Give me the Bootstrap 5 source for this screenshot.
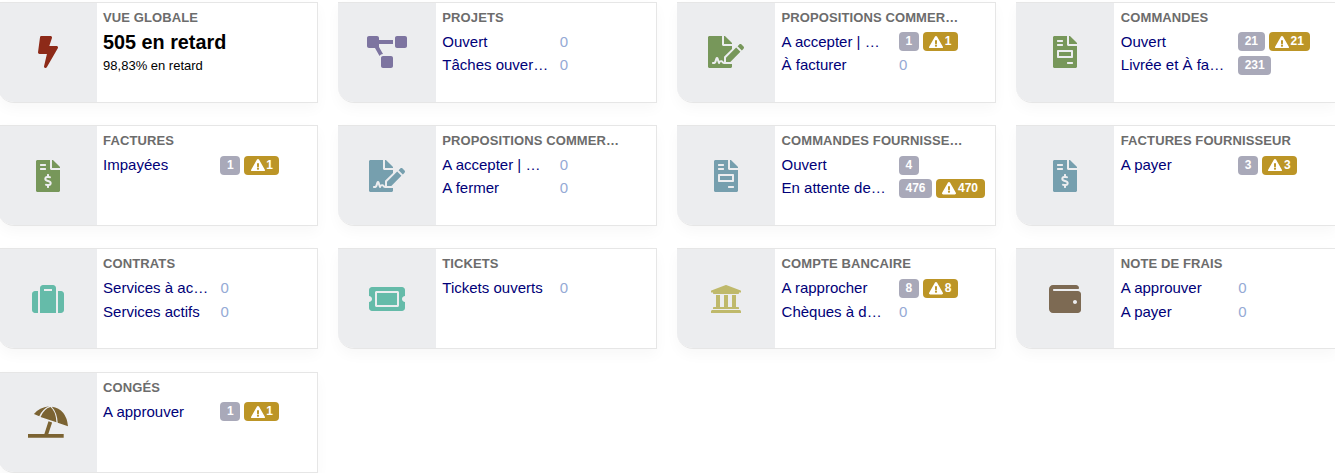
<!DOCTYPE html>
<html lang="fr">
  <head>
    <meta charset="UTF-8" />
    <meta name="viewport" content="width=device-width, initial-scale=1.0" />
    <title>Tableau de bord</title>
    <link
      href="https://cdn.jsdelivr.net/npm/bootstrap@5.3.0/dist/css/bootstrap.min.css"
      rel="stylesheet"
    />
    <script src="https://cdn.jsdelivr.net/npm/bootstrap@5.3.0/dist/js/bootstrap.bundle.min.js"></script>
    <style>
      html,
      body {
        overflow: hidden;
      }
      body {
        font-family: "Liberation Sans", Arial, sans-serif;
        font-size: 15px;
        background: #fff;
      }
      .board {
        margin-left: -1.7px;
        margin-right: -0.65px;
        padding-top: 1.7px;
      }
      .board > .row {
        --bs-gutter-x: 19.65px;
        --bs-gutter-y: 22.23px;
      }
      .tile {
        height: 101.1px;
        border: 1px solid #e6e6e6;
        border-left: 0;
        border-radius: 0 0 0 16px;
        box-shadow: 0 6px 14px rgba(0, 0, 0, 0.03);
        overflow: hidden;
      }
      .tile-side {
        width: 98.4px;
        margin: -1px 0;
        background: #ecedef;
      }
      .tile-body {
        padding: 6px 0 0 6.4px;
        min-width: 0;
      }
      .tile-title {
        font-size: 13px;
        font-weight: 700;
        line-height: 18px;
        letter-spacing: 0.1px;
        color: #6c6c6c;
        text-transform: uppercase;
        margin-bottom: 3.5px;
        white-space: nowrap;
      }
      .tile-line {
        height: 23.35px;
      }
      .tile-label {
        width: 117.4px;
        color: #000078;
        white-space: nowrap;
        flex-shrink: 0;
      }
      .tile-zero {
        color: #95aad5;
      }
      .tile-big {
        font-size: 19.8px;
        font-weight: 700;
        line-height: 24px;
        margin-top: 0.5px;
        color: #000;
      }
      .tile-sub {
        font-size: 13px;
        line-height: 24px;
        color: #000;
      }
      .tally {
        font-size: 12px;
        font-weight: 700;
        line-height: 19px;
        height: 19px;
        padding: 0 6.5px;
        border-radius: 4px;
        color: #fff;
      }
      .tally-grey {
        background: #a9a9b9;
      }
      .tally-late {
        background: #bc9526;
        display: inline-flex;
        align-items: center;
        gap: 1.5px;
      }
      .c-bolt { fill: #8d2a18; }
      .c-purple { fill: #7d74a0; }
      .c-green { fill: #77975a; }
      .c-blue { fill: #769fae; }
      .c-mint { fill: #65bba9; }
      .c-khaki { fill: #bfb96b; }
      .c-brown { fill: #7d6a53; }
      .c-sand { fill: #7b6332; }
    </style>
  </head>
  <body>
    <svg class="d-none" xmlns="http://www.w3.org/2000/svg">
      <defs>
        <path id="i-bolt" d="M296 160H180.6l42.6-129.8C227.2 15 215.7 0 200 0H56C44 0 33.8 8.9 32.2 20.8l-32 240C-1.7 275.2 9.5 288 24 288h118.7L96.6 482.5c-3.6 15.2 8 29.5 23.3 29.5 8.4 0 16.4-4.4 20.8-12l176-304c9.3-15.9-2.2-36-20.7-36z" />
        <path id="i-diagram" d="M384 320H256c-17.67 0-32 14.33-32 32v128c0 17.67 14.33 32 32 32h128c17.67 0 32-14.33 32-32V352c0-17.67-14.33-32-32-32zM192 32c0-17.67-14.33-32-32-32H32C14.33 0 0 14.33 0 32v128c0 17.67 14.33 32 32 32h95.72l73.16 128.04C211.98 300.98 232.4 288 256 288h.28L192 175.51V128h224V64H192V32zM608 0H480c-17.67 0-32 14.33-32 32v128c0 17.67 14.33 32 32 32h128c17.67 0 32-14.33 32-32V32c0-17.67-14.33-32-32-32z" />
        <path id="i-sign" d="M218.17 424.14c-2.95-5.92-8.09-6.52-10.17-6.52s-7.22.59-10.02 6.19l-7.67 15.34c-6.37 12.78-25.03 11.37-29.48-2.09L144 386.59l-10.61 31.88c-5.89 17.66-22.38 29.53-41 29.53H80c-8.84 0-16-7.16-16-16s7.16-16 16-16h12.39c4.83 0 9.11-3.08 10.64-7.66l18.19-54.64c3.3-9.81 12.44-16.41 22.78-16.41s19.48 6.59 22.77 16.41l13.88 41.64c19.75-16.19 54.06-9.7 66 14.16 1.89 3.78 5.49 5.95 9.36 6.26v-82.12l128-127.09V160H248c-13.2 0-24-10.8-24-24V0H24C10.7 0 0 10.7 0 24v464c0 13.3 10.7 24 24 24h336c13.3 0 24-10.7 24-24v-40l-128-.11c-16.12-.31-30.58-9.28-37.83-23.75zM384 121.9c0-6.3-2.5-12.4-7-16.9L279.1 7c-4.5-4.5-10.6-7-17-7H256v128h128v-6.1zm-96 225.06V416h68.99l161.68-162.78-67.88-67.88L288 346.96zm280.54-179.63l-31.87-31.87c-9.94-9.94-26.07-9.94-36.01 0l-27.25 27.25 67.88 67.88 27.25-27.25c9.95-9.94 9.95-26.07 0-36.01z" />
        <path id="i-invoice" d="M288 256H96v64h192v-64zm89-151L279.1 7c-4.5-4.5-10.6-7-17-7H256v128h128v-6.1c0-6.3-2.5-12.4-7-16.9zm-153 31V0H24C10.7 0 0 10.7 0 24v464c0 13.3 10.7 24 24 24h336c13.3 0 24-10.7 24-24V160H248c-13.2 0-24-10.8-24-24zM64 72c0-4.42 3.58-8 8-8h80c4.42 0 8 3.58 8 8v16c0 4.42-3.58 8-8 8H72c-4.42 0-8-3.58-8-8V72zm0 64c0-4.42 3.58-8 8-8h80c4.42 0 8 3.58 8 8v16c0 4.42-3.58 8-8 8H72c-4.42 0-8-3.58-8-8v-16zm256 304c0 4.42-3.58 8-8 8h-80c-4.42 0-8-3.58-8-8v-16c0-4.42 3.58-8 8-8h80c4.42 0 8 3.58 8 8v16zm0-200v96c0 8.84-7.16 16-16 16H80c-8.84 0-16-7.16-16-16v-96c0-8.84 7.16-16 16-16h224c8.84 0 16 7.16 16 16z" />
        <path id="i-dollar" d="M377 105L279.1 7c-4.5-4.5-10.6-7-17-7H256v128h128v-6.1c0-6.3-2.5-12.4-7-16.9zm-153 31V0H24C10.7 0 0 10.7 0 24v464c0 13.3 10.7 24 24 24h336c13.3 0 24-10.7 24-24V160H248c-13.2 0-24-10.8-24-24zM64 72c0-4.42 3.58-8 8-8h80c4.42 0 8 3.58 8 8v16c0 4.42-3.58 8-8 8H72c-4.42 0-8-3.58-8-8V72zm0 80v-16c0-4.42 3.58-8 8-8h80c4.42 0 8 3.58 8 8v16c0 4.42-3.58 8-8 8H72c-4.42 0-8-3.58-8-8zm144 263.88V440c0 4.42-3.58 8-8 8h-16c-4.42 0-8-3.58-8-8v-24.29c-11.29-.58-22.27-4.52-31.37-11.35-3.9-2.93-4.1-8.77-.57-12.14l11.75-11.21c2.77-2.64 6.89-2.76 10.13-.73 3.87 2.42 8.26 3.72 12.82 3.72h28.11c6.5 0 11.8-5.92 11.8-13.19 0-5.95-3.61-11.19-8.77-12.73l-45-13.5c-18.59-5.58-31.58-23.42-31.58-43.39 0-24.52 19.05-44.44 42.67-45.07V232c0-4.42 3.58-8 8-8h16c4.42 0 8 3.58 8 8v24.29c11.29.58 22.27 4.51 31.37 11.35 3.9 2.93 4.1 8.77.57 12.14l-11.75 11.21c-2.77 2.64-6.89 2.76-10.13.73-3.87-2.43-8.26-3.72-12.82-3.72h-28.11c-6.5 0-11.8 5.92-11.8 13.19 0 5.95 3.61 11.19 8.77 12.73l45 13.5c18.59 5.58 31.58 23.42 31.58 43.39 0 24.53-19.05 44.44-42.67 45.07z" />
        <path id="i-case" d="M128 480h256V80c0-26.5-21.5-48-48-48H176c-26.5 0-48 21.5-48 48v400zm64-384h128v32H192V96zm320 80v256c0 26.5-21.5 48-48 48h-48V128h48c26.5 0 48 21.5 48 48zM96 480H48c-26.5 0-48-21.5-48-48V176c0-26.5 21.5-48 48-48h48v352z" />
        <path id="i-ticket" d="M128 160h320v192H128V160zm400 96c0 26.51 21.49 48 48 48v96c0 26.51-21.49 48-48 48H48c-26.51 0-48-21.49-48-48v-96c26.51 0 48-21.49 48-48s-21.49-48-48-48v-96c0-26.51 21.49-48 48-48h480c26.51 0 48 21.49 48 48v96c-26.51 0-48 21.49-48 48zm-48-104c0-13.255-10.745-24-24-24H120c-13.255 0-24 10.745-24 24v208c0 13.255 10.745 24 24 24h336c13.255 0 24-10.745 24-24V152z" />
        <path id="i-bank" d="M496 128v16a8 8 0 0 1-8 8h-24v12c0 6.627-5.373 12-12 12H60c-6.627 0-12-5.373-12-12v-12H24a8 8 0 0 1-8-8v-16a8 8 0 0 1 4.941-7.392l232-88a7.996 7.996 0 0 1 6.118 0l232 88A8 8 0 0 1 496 128zm-24 304H40c-13.255 0-24 10.745-24 24v16a8 8 0 0 0 8 8h464a8 8 0 0 0 8-8v-16c0-13.255-10.745-24-24-24zM96 192v192H60c-6.627 0-12 5.373-12 12v20h416v-20c0-6.627-5.373-12-12-12h-36V192h-64v192h-64V192h-64v192h-64V192H96z" />
        <path id="i-wallet" d="M461.2 128H80c-8.84 0-16-7.16-16-16s7.16-16 16-16h384c8.84 0 16-7.16 16-16 0-26.51-21.49-48-48-48H64C28.65 32 0 60.65 0 96v320c0 35.35 28.65 64 64 64h397.2c28.02 0 50.8-21.53 50.8-48V176c0-26.47-22.78-48-50.8-48zM416 336c-17.67 0-32-14.33-32-32s14.33-32 32-32 32 14.33 32 32-14.33 32-32 32z" />
        <path id="i-beach" d="M18 23Q34 4 64 0Q44 8 34 30ZM38 32Q48 8 68 2Q84 14 86 48ZM72 1Q116 8 121 60L90 50Q88 18 72 1ZM62 45L73 49L61 85H49ZM0 84H108V95H0Z" />
        <path id="i-warn" d="M569.517 440.013C587.975 472.007 564.806 512 527.94 512H48.054c-36.937 0-59.999-40.055-41.577-71.987L246.423 24.028c18.467-32.009 64.72-31.951 83.154 0l239.94 416.085zM288 354c-25.405 0-46 20.595-46 46s20.595 46 46 46 46-20.595 46-46-20.595-46-46-46zm-43.673-165.346l7.418 136c.347 6.364 5.609 11.346 11.982 11.346h48.546c6.373 0 11.635-4.982 11.982-11.346l7.418-136c.375-6.874-5.098-12.654-11.982-12.654h-63.383c-6.884 0-12.356 5.78-11.981 12.654z" />
      </defs>
    </svg>

    <div class="board">
      <div class="row row-cols-4">
        <div class="col">
          <div class="tile d-flex bg-white">
            <div class="tile-side d-flex align-items-center justify-content-center flex-shrink-0">
              <svg class="c-bolt" width="20" height="32" viewBox="0 0 320 512"><use href="#i-bolt" /></svg>
            </div>
            <div class="tile-body flex-grow-1">
              <div class="tile-title">Vue globale</div>
              <div class="tile-big">505 en retard</div>
              <div class="tile-sub">98,83% en retard</div>
            </div>
          </div>
        </div>

        <div class="col">
          <div class="tile d-flex bg-white">
            <div class="tile-side d-flex align-items-center justify-content-center flex-shrink-0">
              <svg class="c-purple" width="40" height="32" viewBox="0 0 640 512"><use href="#i-diagram" /></svg>
            </div>
            <div class="tile-body flex-grow-1">
              <div class="tile-title">Projets</div>
              <div class="tile-line d-flex align-items-center">
                <span class="tile-label">Ouvert</span><span class="tile-zero">0</span>
              </div>
              <div class="tile-line d-flex align-items-center">
                <span class="tile-label">Tâches ouver…</span><span class="tile-zero">0</span>
              </div>
            </div>
          </div>
        </div>

        <div class="col">
          <div class="tile d-flex bg-white">
            <div class="tile-side d-flex align-items-center justify-content-center flex-shrink-0">
              <svg class="c-green" width="36" height="32" viewBox="0 0 576 512"><use href="#i-sign" /></svg>
            </div>
            <div class="tile-body flex-grow-1">
              <div class="tile-title">Propositions commer…</div>
              <div class="tile-line d-flex align-items-center">
                <span class="tile-label">A accepter | …</span>
                <div class="d-flex gap-1">
                  <span class="badge tally tally-grey">1</span>
                  <span class="badge tally tally-late"><svg width="14" height="12.5" viewBox="0 0 576 512" fill="#fff"><use href="#i-warn" /></svg>1</span>
                </div>
              </div>
              <div class="tile-line d-flex align-items-center">
                <span class="tile-label">À facturer</span><span class="tile-zero">0</span>
              </div>
            </div>
          </div>
        </div>

        <div class="col">
          <div class="tile d-flex bg-white">
            <div class="tile-side d-flex align-items-center justify-content-center flex-shrink-0">
              <svg class="c-green" width="24" height="32" viewBox="0 0 384 512"><use href="#i-invoice" /></svg>
            </div>
            <div class="tile-body flex-grow-1">
              <div class="tile-title">Commandes</div>
              <div class="tile-line d-flex align-items-center">
                <span class="tile-label">Ouvert</span>
                <div class="d-flex gap-1">
                  <span class="badge tally tally-grey">21</span>
                  <span class="badge tally tally-late"><svg width="14" height="12.5" viewBox="0 0 576 512" fill="#fff"><use href="#i-warn" /></svg>21</span>
                </div>
              </div>
              <div class="tile-line d-flex align-items-center">
                <span class="tile-label">Livrée et À fa…</span>
                <span class="badge tally tally-grey">231</span>
              </div>
            </div>
          </div>
        </div>

        <div class="col">
          <div class="tile d-flex bg-white">
            <div class="tile-side d-flex align-items-center justify-content-center flex-shrink-0">
              <svg class="c-green" width="24" height="32" viewBox="0 0 384 512"><use href="#i-dollar" /></svg>
            </div>
            <div class="tile-body flex-grow-1">
              <div class="tile-title">Factures</div>
              <div class="tile-line d-flex align-items-center">
                <span class="tile-label">Impayées</span>
                <div class="d-flex gap-1">
                  <span class="badge tally tally-grey">1</span>
                  <span class="badge tally tally-late"><svg width="14" height="12.5" viewBox="0 0 576 512" fill="#fff"><use href="#i-warn" /></svg>1</span>
                </div>
              </div>
            </div>
          </div>
        </div>

        <div class="col">
          <div class="tile d-flex bg-white">
            <div class="tile-side d-flex align-items-center justify-content-center flex-shrink-0">
              <svg class="c-blue" width="36" height="32" viewBox="0 0 576 512"><use href="#i-sign" /></svg>
            </div>
            <div class="tile-body flex-grow-1">
              <div class="tile-title">Propositions commer…</div>
              <div class="tile-line d-flex align-items-center">
                <span class="tile-label">A accepter | …</span><span class="tile-zero">0</span>
              </div>
              <div class="tile-line d-flex align-items-center">
                <span class="tile-label">A fermer</span><span class="tile-zero">0</span>
              </div>
            </div>
          </div>
        </div>

        <div class="col">
          <div class="tile d-flex bg-white">
            <div class="tile-side d-flex align-items-center justify-content-center flex-shrink-0">
              <svg class="c-blue" width="24" height="32" viewBox="0 0 384 512"><use href="#i-invoice" /></svg>
            </div>
            <div class="tile-body flex-grow-1">
              <div class="tile-title">Commandes fournisse…</div>
              <div class="tile-line d-flex align-items-center">
                <span class="tile-label">Ouvert</span>
                <span class="badge tally tally-grey">4</span>
              </div>
              <div class="tile-line d-flex align-items-center">
                <span class="tile-label">En attente de…</span>
                <div class="d-flex gap-1">
                  <span class="badge tally tally-grey">476</span>
                  <span class="badge tally tally-late"><svg width="14" height="12.5" viewBox="0 0 576 512" fill="#fff"><use href="#i-warn" /></svg>470</span>
                </div>
              </div>
            </div>
          </div>
        </div>

        <div class="col">
          <div class="tile d-flex bg-white">
            <div class="tile-side d-flex align-items-center justify-content-center flex-shrink-0">
              <svg class="c-blue" width="24" height="32" viewBox="0 0 384 512"><use href="#i-dollar" /></svg>
            </div>
            <div class="tile-body flex-grow-1">
              <div class="tile-title">Factures fournisseur</div>
              <div class="tile-line d-flex align-items-center">
                <span class="tile-label">A payer</span>
                <div class="d-flex gap-1">
                  <span class="badge tally tally-grey">3</span>
                  <span class="badge tally tally-late"><svg width="14" height="12.5" viewBox="0 0 576 512" fill="#fff"><use href="#i-warn" /></svg>3</span>
                </div>
              </div>
            </div>
          </div>
        </div>

        <div class="col">
          <div class="tile d-flex bg-white">
            <div class="tile-side d-flex align-items-center justify-content-center flex-shrink-0">
              <svg class="c-mint" width="32" height="32" viewBox="0 0 512 512"><use href="#i-case" /></svg>
            </div>
            <div class="tile-body flex-grow-1">
              <div class="tile-title">Contrats</div>
              <div class="tile-line d-flex align-items-center">
                <span class="tile-label">Services à ac…</span><span class="tile-zero">0</span>
              </div>
              <div class="tile-line d-flex align-items-center">
                <span class="tile-label">Services actifs</span><span class="tile-zero">0</span>
              </div>
            </div>
          </div>
        </div>

        <div class="col">
          <div class="tile d-flex bg-white">
            <div class="tile-side d-flex align-items-center justify-content-center flex-shrink-0">
              <svg class="c-mint" width="36" height="32" viewBox="0 0 576 512"><use href="#i-ticket" /></svg>
            </div>
            <div class="tile-body flex-grow-1">
              <div class="tile-title">Tickets</div>
              <div class="tile-line d-flex align-items-center">
                <span class="tile-label">Tickets ouverts</span><span class="tile-zero">0</span>
              </div>
            </div>
          </div>
        </div>

        <div class="col">
          <div class="tile d-flex bg-white">
            <div class="tile-side d-flex align-items-center justify-content-center flex-shrink-0">
              <svg class="c-khaki" width="32" height="32" viewBox="0 0 512 512"><use href="#i-bank" /></svg>
            </div>
            <div class="tile-body flex-grow-1">
              <div class="tile-title">Compte bancaire</div>
              <div class="tile-line d-flex align-items-center">
                <span class="tile-label">A rapprocher</span>
                <div class="d-flex gap-1">
                  <span class="badge tally tally-grey">8</span>
                  <span class="badge tally tally-late"><svg width="14" height="12.5" viewBox="0 0 576 512" fill="#fff"><use href="#i-warn" /></svg>8</span>
                </div>
              </div>
              <div class="tile-line d-flex align-items-center">
                <span class="tile-label">Chèques à d…</span><span class="tile-zero">0</span>
              </div>
            </div>
          </div>
        </div>

        <div class="col">
          <div class="tile d-flex bg-white">
            <div class="tile-side d-flex align-items-center justify-content-center flex-shrink-0">
              <svg class="c-brown" width="32" height="32" viewBox="0 0 512 512"><use href="#i-wallet" /></svg>
            </div>
            <div class="tile-body flex-grow-1">
              <div class="tile-title">Note de frais</div>
              <div class="tile-line d-flex align-items-center">
                <span class="tile-label">A approuver</span><span class="tile-zero">0</span>
              </div>
              <div class="tile-line d-flex align-items-center">
                <span class="tile-label">A payer</span><span class="tile-zero">0</span>
              </div>
            </div>
          </div>
        </div>

        <div class="col">
          <div class="tile d-flex bg-white">
            <div class="tile-side d-flex align-items-center justify-content-center flex-shrink-0">
              <svg class="c-sand" width="40" height="32" viewBox="0 0 121 95"><use href="#i-beach" /></svg>
            </div>
            <div class="tile-body flex-grow-1">
              <div class="tile-title">Congés</div>
              <div class="tile-line d-flex align-items-center">
                <span class="tile-label">A approuver</span>
                <div class="d-flex gap-1">
                  <span class="badge tally tally-grey">1</span>
                  <span class="badge tally tally-late"><svg width="14" height="12.5" viewBox="0 0 576 512" fill="#fff"><use href="#i-warn" /></svg>1</span>
                </div>
              </div>
            </div>
          </div>
        </div>
      </div>
    </div>
  </body>
</html>
